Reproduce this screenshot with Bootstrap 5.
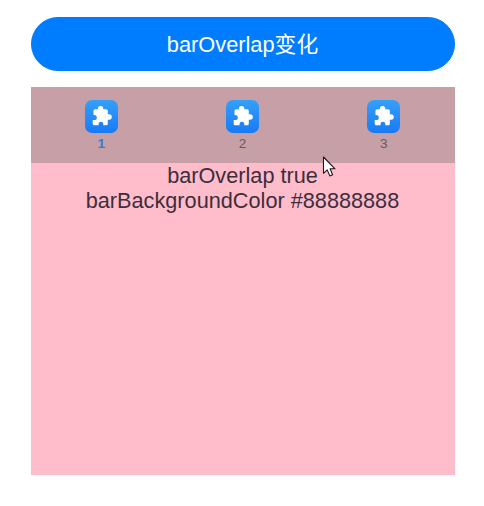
<!DOCTYPE html>
<html lang="zh-CN">
<head>
<meta charset="utf-8">
<meta name="viewport" content="width=device-width, initial-scale=1">
<title>barOverlap</title>
<link href="https://cdn.jsdelivr.net/npm/bootstrap@5.3.0/dist/css/bootstrap.min.css" rel="stylesheet">
<style>
  body { font-family: "Liberation Sans", "Noto Sans CJK SC", sans-serif; overflow: hidden; }
  .demo { width: 424px; margin: 16.5px 0 0 30.5px; }
  .btn-toggle { --bs-btn-bg: #007dff; --bs-btn-border-color: #007dff; --bs-btn-hover-bg: #0074ee; height: 54px; padding-top: 8px; font-size: 21.8px; line-height: 1; }
  .tabs-panel { margin-top: 16.5px; height: 388px; background: #ffbccb; color: #3d2e3c; }
  .tab-bar { height: 76px; padding-top: 13px; background: #c69fa7; }
  .tab-link { font-size: 13.6px; line-height: 16px; color: #6d5861; }
  .tab-link.active { color: #2c7fdc; }
  .tab-icon { width: 33px; height: 33px; margin-bottom: 2.5px; border-radius: 7px; background: linear-gradient(#35a0f8, #187af8); }
  .tab-text { font-size: 21.7px; line-height: 25px; }
  .pointer { left: 322px; top: 155px; width: 14px; height: 23px; }
</style>
<script src="https://cdn.jsdelivr.net/npm/bootstrap@5.3.0/dist/js/bootstrap.bundle.min.js"></script>
</head>
<body class="bg-white">
<svg class="d-none">
  <symbol id="puzzle" viewBox="0 0 33 33">
    <path fill="#fff" d="M10 9.2H12.9V8.8A2.7 2.7 0 0 1 18.3 8.8V9.2H21.3Q22.8 9.2 22.8 10.7V14.2H24A2.8 2.8 0 0 1 24 19.8H22.8V23.8Q22.8 25.3 21.3 25.3H18.3V24.2A2.4 2.4 0 0 0 13.5 24.2V25.3H9.2Q7.7 25.3 7.7 23.8V20.1H9.2A2.6 2.6 0 0 0 9.2 14.9H8.5V10.7Q8.5 9.2 10 9.2Z"/>
  </symbol>
</svg>
<main class="demo">
  <button type="button" class="btn btn-primary btn-toggle rounded-pill w-100 d-flex align-items-center justify-content-center">barOverlap变化</button>
  <section class="tabs-panel">
    <nav class="tab-bar nav nav-fill nav-justified align-items-start">
      <a class="nav-item tab-link active text-decoration-none d-flex flex-column align-items-center" href="#"><svg class="tab-icon"><use href="#puzzle"/></svg><span class="fw-bold">1</span></a>
      <a class="nav-item tab-link text-decoration-none d-flex flex-column align-items-center" href="#"><svg class="tab-icon"><use href="#puzzle"/></svg><span>2</span></a>
      <a class="nav-item tab-link text-decoration-none d-flex flex-column align-items-center" href="#"><svg class="tab-icon"><use href="#puzzle"/></svg><span>3</span></a>
    </nav>
    <div class="tab-text text-center">barOverlap true<br>barBackgroundColor #88888888</div>
  </section>
</main>
<svg class="pointer position-absolute" viewBox="0 0 14 23"><path d="M1.5 2V18.3L5.2 14.9L7.8 20.9L10.6 19.7L8.1 13.8H13Z" fill="#fff" stroke="#21151f" stroke-width="1.1" stroke-linejoin="round"/></svg>
</body>
</html>
